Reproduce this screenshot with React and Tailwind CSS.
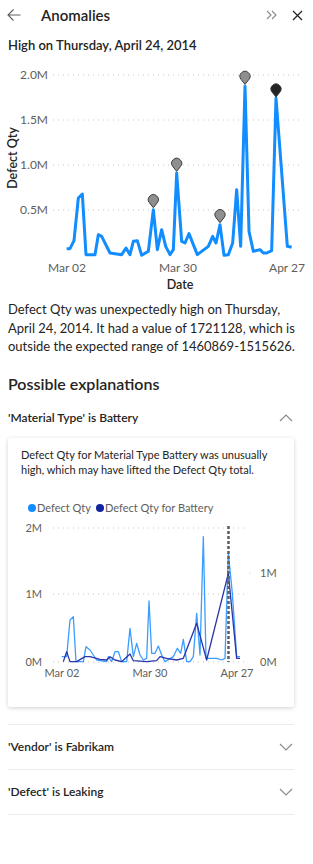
import React from 'react';

const FONT = { fontFamily: 'Lato, "Noto Sans", sans-serif' };

// main chart line, traced in 3x coords
const MAIN = [
  [200, 572], [210, 572], [222, 548], [235, 420], [247, 408], [258, 590], [285, 590], [295, 530],
  [305, 535], [330, 585], [365, 590], [378, 570], [390, 590], [400, 550], [412, 548], [425, 592],
  [445, 580], [460, 455], [472, 575], [485, 515], [497, 565], [510, 590], [520, 575], [530, 345],
  [545, 550], [555, 555], [567, 527], [580, 560], [592, 590], [625, 565], [638, 535], [648, 555],
  [660, 500], [672, 592], [685, 590], [698, 555], [710, 395], [722, 565], [735, 85], [747, 520],
  [760, 580], [780, 575], [790, 585], [800, 585], [815, 578], [828, 120], [862, 565], [875, 568],
];

const MARKERS = [
  [460, 425, false], [530, 316, false], [660, 470, false], [735, 55, false], [828, 93, true],
];

const LIGHT = [
  [185, 350], [200, 350], [210, 240], [220, 230], [228, 365], [250, 365], [258, 320], [270, 330],
  [290, 360], [320, 365], [325, 350], [335, 365], [345, 335], [355, 335], [365, 365], [380, 365],
  [390, 265], [400, 350], [410, 310], [420, 345], [430, 360], [440, 355], [447, 183], [455, 340],
  [465, 340], [475, 318], [485, 345], [495, 365], [520, 350], [532, 325], [542, 340], [550, 298],
  [560, 365], [570, 365], [580, 350], [590, 220], [600, 345], [610, -10], [618, 355], [625, 355],
  [635, 355], [650, 355], [665, 360], [675, 355], [685, 40], [697, 160], [710, 350], [720, 350],
];

const DARK = [
  [190, 365], [200, 335], [210, 365], [230, 365], [255, 350], [270, 350], [300, 358], [320, 360],
  [330, 350], [345, 360], [365, 365], [390, 342], [400, 362], [440, 365], [470, 362], [480, 350],
  [500, 355], [530, 360], [550, 355], [590, 250], [620, 360], [685, 100], [710, 355], [720, 355],
];

const mainPts = MAIN.map(([x, y]) => `${x / 3},${y / 3}`).join(' ');
// card chart: local x = zx/3 - 8, local y = 24 + zy/3
const cardPts = (arr) => arr.map(([x, y]) => `${x / 3 - 8},${24 + y / 3}`).join(' ');

const Chevron = ({ up }) => (
  <svg width="14" height="8" viewBox="0 0 14 8">
    <polyline
      points={up ? '1,7 7,1 13,7' : '1,1 7,7 13,1'}
      fill="none"
      stroke="#8a8886"
      strokeWidth="1.1"
    />
  </svg>
);

const Pin = ({ cx, cy, dark }) => (
  <path
    d={`M ${cx} ${cy + 8} L ${cx - 4} ${cy + 3} A 5 5 0 1 1 ${cx + 4} ${cy + 3} Z`}
    fill={dark ? '#252423' : '#8f8f8f'}
    stroke="#3b3a39"
    strokeWidth="1"
  />
);

const MainChart = () => {
  const ticks = [
    ['2.0M', 17], ['1.5M', 62], ['1.0M', 107], ['0.5M', 152],
  ];
  return (
    <svg width="313" height="236" className="block">
      <text
        x="0"
        y="0"
        transform="translate(17 100) rotate(-90)"
        textAnchor="middle"
        fontSize="12.5"
        fontWeight="600"
        fill="#252423"
        style={FONT}
      >
        Defect Qty
      </text>
      {ticks.map(([t, y]) => (
        <g key={t}>
          <text x="48" y={y + 4} textAnchor="end" fontSize="12" fill="#605e5c" style={FONT}>
            {t}
          </text>
          <line x1="53" y1={y} x2="302" y2={y} stroke="#c8c6c4" strokeWidth="1" strokeDasharray="1 4" />
        </g>
      ))}
      <polyline points={mainPts} fill="none" stroke="#118dff" strokeWidth="3" strokeLinejoin="round" />
      {MARKERS.map(([x, y, d]) => (
        <Pin key={x} cx={x / 3} cy={y / 3} dark={d} />
      ))}
      {[['Mar 02', 67], ['Mar 30', 178], ['Apr 27', 287]].map(([t, x]) => (
        <text key={t} x={x} y="214" textAnchor="middle" fontSize="12" fill="#605e5c" style={FONT}>
          {t}
        </text>
      ))}
      <text x="180" y="231" textAnchor="middle" fontSize="12.5" fontWeight="600" fill="#252423" style={FONT}>
        Date
      </text>
    </svg>
  );
};

const CardChart = () => (
  <svg width="284" height="172" className="block">
    {[['2M', 12], ['1M', 78], ['0M', 146]].map(([t, y]) => (
      <g key={t}>
        <text x="34" y={y + 4} textAnchor="end" fontSize="11" fill="#605e5c" style={FONT}>
          {t}
        </text>
        <line x1="45" y1={y} x2="238" y2={y} stroke="#c8c6c4" strokeWidth="1" strokeDasharray="1 4" />
      </g>
    ))}
    <circle cx="242" cy="57" r="0.6" fill="#c8c6c4" />
    <text x="252" y="61" fontSize="11" fill="#605e5c" style={FONT}>1M</text>
    <text x="252" y="150" fontSize="11" fill="#605e5c" style={FONT}>0M</text>
    <polyline points={cardPts(LIGHT)} fill="none" stroke="#3a9dff" strokeWidth="1.3" strokeLinejoin="round" />
    <polyline points={cardPts(DARK)} fill="none" stroke="#2b35a8" strokeWidth="1.3" strokeLinejoin="round" />
    <line x1="220.5" y1="10" x2="220.5" y2="146" stroke="#605e5c" strokeWidth="2.5" strokeDasharray="3 2" />
    {[['Mar 02', 54], ['Mar 30', 142], ['Apr 27', 229]].map(([t, x]) => (
      <text key={t} x={x} y="161" textAnchor="middle" fontSize="11" fill="#605e5c" style={FONT}>
        {t}
      </text>
    ))}
  </svg>
);

const Row = ({ label, up, h = 'h-[44px]' }) => (
  <div className={`flex items-center justify-between ${h} pr-[1px]`}>
    <span className="text-[12px] font-semibold text-[#252423]">{label}</span>
    <Chevron up={up} />
  </div>
);

export default function App() {
  return (
    <div className="w-[313px] h-[864px] bg-white text-[#252423] overflow-hidden" style={FONT}>
      {/* header */}
      <div className="flex items-center h-[30px] pl-[7px] pr-[10px]">
        <svg width="14" height="12" viewBox="0 0 14 12">
          <path d="M13.5 6 H1 M6.5 0.5 L1 6 L6.5 11.5" fill="none" stroke="#605e5c" strokeWidth="1.1" />
        </svg>
        <span className="ml-[20px] text-[15px] font-semibold">Anomalies</span>
        <div className="ml-auto flex items-center gap-[15px]">
          <svg width="11" height="10" viewBox="0 0 11 10">
            <path d="M1 1 L5 5 L1 9 M6 1 L10 5 L6 9" fill="none" stroke="#8a8886" strokeWidth="1.1" />
          </svg>
          <svg width="11" height="11" viewBox="0 0 11 11">
            <path d="M1 1 L10 10 M10 1 L1 10" fill="none" stroke="#252423" strokeWidth="1.3" />
          </svg>
        </div>
      </div>

      <div className="px-[8px] pt-[7px] text-[13px] font-semibold leading-[16px]">
        High on Thursday, April 24, 2014
      </div>

      <div className="mt-[5px]">
        <MainChart />
      </div>

      <p className="px-[8px] mt-[6px] text-[13px] leading-[18.5px] text-[#252423]">
        Defect Qty was unexpectedly high on Thursday, April 24, 2014. It had a value of 1721128, which is
        outside the expected range of 1460869-1515626.
      </p>

      <h2 className="px-[8px] mt-[18px] text-[16px] font-semibold leading-[20px]">Possible explanations</h2>

      <div className="mx-[8px] mt-[4px] w-[286px]">
        <Row label="'Material Type' is Battery" up h="h-[40px]" />
        <div className="rounded-[2px] bg-white shadow-[0_1px_4px_rgba(0,0,0,0.18)]">
          <p className="px-[13px] pt-[9px] text-[11px] leading-[15px] text-[#252423]">
            Defect Qty for Material Type Battery was unusually high, which may have lifted the Defect Qty total.
          </p>
          <div className="flex items-center mt-[24px] pl-[20px] text-[11px] text-[#605e5c] leading-[14px]">
            <span className="w-[8px] h-[8px] rounded-full bg-[#118dff]" />
            <span className="ml-[1px]">Defect Qty</span>
            <span className="ml-[5px] w-[8px] h-[8px] rounded-full bg-[#12239e]" />
            <span className="ml-[1px]">Defect Qty for Battery</span>
          </div>
          <div className="mt-[1px] pb-[19px]">
            <CardChart />
          </div>
        </div>
        <div className="mt-[17px] border-t border-[#edebe9]">
          <Row label="'Vendor' is Fabrikam" />
        </div>
        <div className="border-t border-[#edebe9]">
          <Row label="'Defect' is Leaking" />
        </div>
        <div className="border-t border-[#edebe9]" />
      </div>
    </div>
  );
}
